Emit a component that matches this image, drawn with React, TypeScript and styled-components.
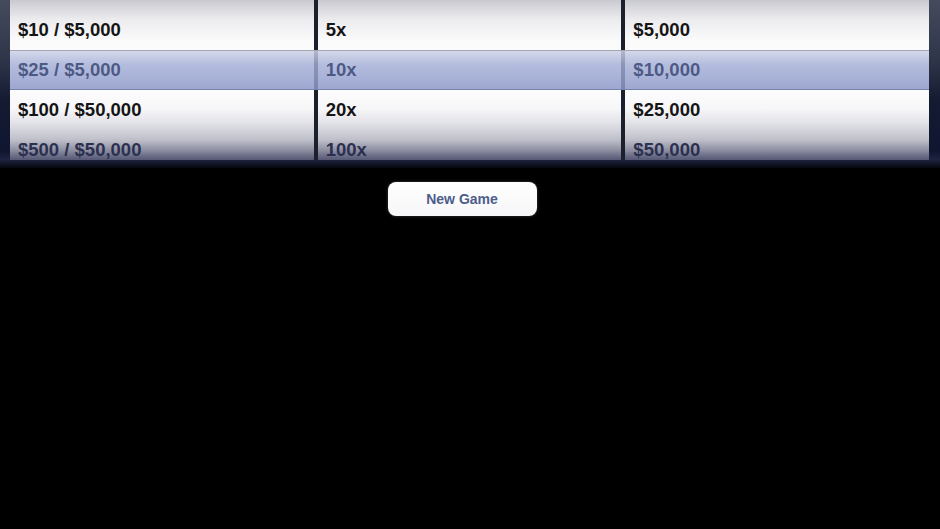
import React from "react";
import styled, { createGlobalStyle } from "styled-components";

const GlobalStyle = createGlobalStyle`
  html, body {
    margin: 0;
    padding: 0;
    background: #000;
  }
  body {
    font-family: "Liberation Sans", Arial, sans-serif;
  }
`;

const Page = styled.div`
  width: 940px;
  height: 529px;
  background: #000;
  overflow: hidden;
`;

const PickerFrame = styled.div`
  position: relative;
  height: 160px;
  padding: 0 11px 8px 10px;
  background: linear-gradient(
    180deg,
    #454b5c 0%,
    #30364a 35%,
    #141a30 60%,
    #101630 90%,
    #1e2440 95%,
    #05060c 100%
  );
`;

const Wheels = styled.div`
  display: flex;
  height: 160px;
  gap: 4px;
  background: #1c1f2c;
`;

const Wheel = styled.div`
  position: relative;
  flex: 1;
  overflow: hidden;
  padding-top: 10px;
  background: linear-gradient(
    180deg,
    #c9c9d0 0%,
    #ececef 12%,
    #fafafb 25%,
    #ffffff 50%,
    #f7f7f9 68%,
    #e4e4ea 76%,
    #c4c4ce 86%,
    #a2a3b2 94%,
    #6e7088 100%
  );

  &::after {
    content: "";
    position: absolute;
    inset: 0;
    background: linear-gradient(
      180deg,
      rgba(255, 255, 255, 0) 0%,
      rgba(255, 255, 255, 0) 88%,
      rgba(40, 44, 80, 0.35) 100%
    );
    pointer-events: none;
  }
`;

const Row = styled.div<{ $faded?: boolean }>`
  height: 40px;
  display: flex;
  align-items: center;
  padding-left: 8px;
  font-size: 18.5px;
  font-weight: 700;
  color: ${(p) => (p.$faded ? "#2c3150" : "#151515")};
`;

const SelectionBand = styled.div`
  position: absolute;
  left: 10px;
  right: 11px;
  top: 50px;
  height: 40px;
  box-sizing: border-box;
  border-top: 1px solid #a2a6b4;
  border-bottom: 1px solid #7482b0;
  background: linear-gradient(
    180deg,
    rgba(205, 210, 230, 0.85) 0%,
    rgba(165, 175, 215, 0.82) 35%,
    rgba(140, 152, 200, 0.85) 100%
  );
  pointer-events: none;
`;

const BandLabels = styled.div`
  display: flex;
  gap: 4px;
  height: 100%;
`;

const BandLabel = styled.div`
  flex: 1;
  display: flex;
  align-items: center;
  padding-left: 8px;
  font-size: 18.5px;
  font-weight: 700;
  color: rgba(58, 72, 118, 0.85);
`;

const ButtonBar = styled.div`
  display: flex;
  justify-content: center;
  padding-top: 14px;
  padding-right: 16px;
`;

const NewGameButton = styled.button`
  width: 149px;
  height: 34px;
  border: none;
  border-radius: 8px;
  background: linear-gradient(180deg, #ffffff 0%, #f6f6f8 100%);
  box-shadow: 0 0 3px rgba(255, 255, 255, 0.25);
  font-family: "Liberation Sans", Arial, sans-serif;
  font-size: 14px;
  font-weight: 700;
  color: #4d5c8a;
  cursor: pointer;
`;

const columns: string[][] = [
  ["$10 / $5,000", "$25 / $5,000", "$100 / $50,000", "$500 / $50,000"],
  ["5x", "10x", "20x", "100x"],
  ["$5,000", "$10,000", "$25,000", "$50,000"],
];

const SELECTED = 1;

const App: React.FC = () => {
  return (
    <Page>
      <GlobalStyle />
      <PickerFrame>
        <Wheels>
          {columns.map((col, ci) => (
            <Wheel key={ci}>
              {col.map((item, ri) => (
                <Row key={item} $faded={ri === 3}>
                  {ri === SELECTED ? "" : item}
                </Row>
              ))}
            </Wheel>
          ))}
        </Wheels>
        <SelectionBand>
          <BandLabels>
            {columns.map((col, ci) => (
              <BandLabel key={ci}>{col[SELECTED]}</BandLabel>
            ))}
          </BandLabels>
        </SelectionBand>
      </PickerFrame>
      <ButtonBar>
        <NewGameButton>New Game</NewGameButton>
      </ButtonBar>
    </Page>
  );
};

export default App;
